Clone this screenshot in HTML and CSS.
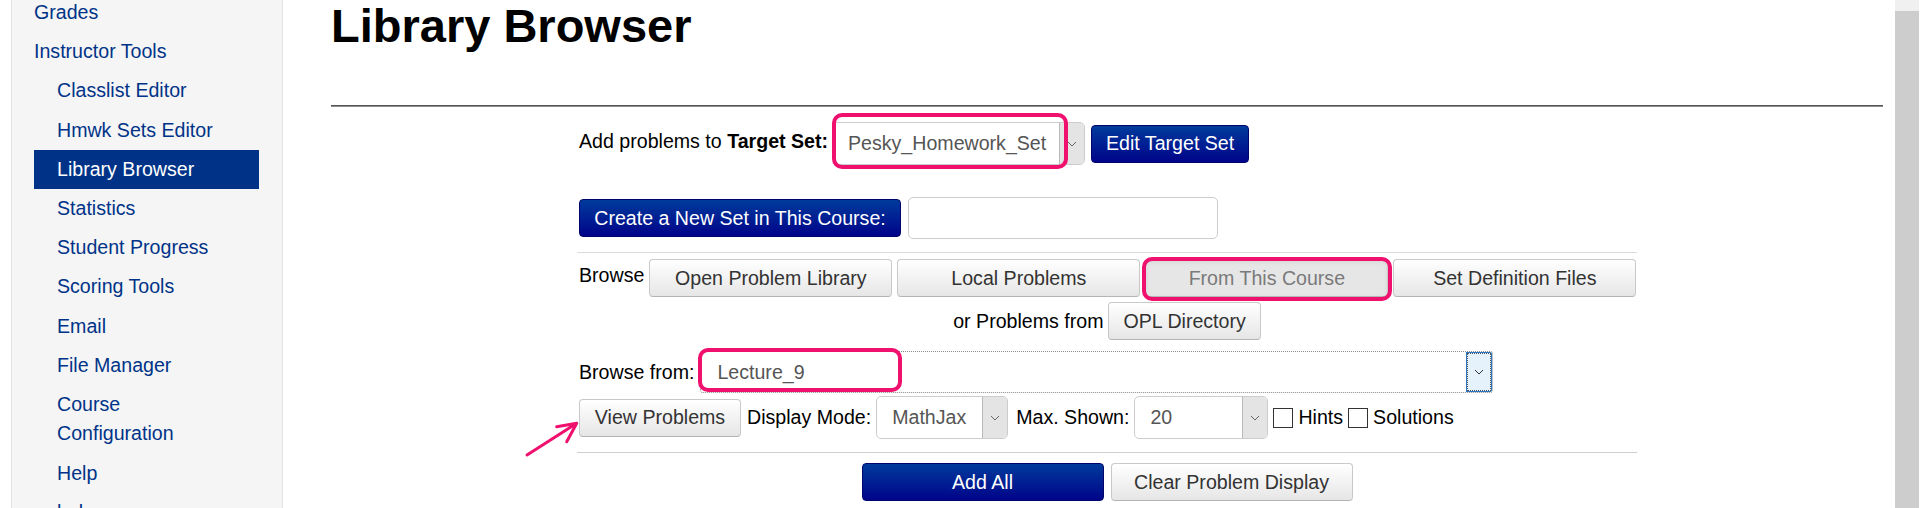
FILE: index.html
```html
<!DOCTYPE html>
<html lang="en">
<head>
<meta charset="utf-8">
<title>Library Browser</title>
<link rel="stylesheet" href="styles.css">
</head>
<body>
<div class="page">
  <aside class="sidebar">
    <ul class="nav">
      <li><a class="top">Grades</a></li>
      <li><a class="top">Instructor Tools</a></li>
      <li><a class="sub">Classlist Editor</a></li>
      <li><a class="sub">Hmwk Sets Editor</a></li>
      <li><a class="sub active">Library Browser</a></li>
      <li><a class="sub">Statistics</a></li>
      <li><a class="sub">Student Progress</a></li>
      <li><a class="sub">Scoring Tools</a></li>
      <li><a class="sub">Email</a></li>
      <li><a class="sub">File Manager</a></li>
      <li><a class="sub">Course Configuration</a></li>
      <li><a class="sub">Help</a></li>
      <li><a class="sub">help</a></li>
    </ul>
  </aside>

  <main class="main">
    <h1 class="title">Library Browser</h1>
    <div class="rule-dark"></div>

    <div class="form">
      <div class="row row1">
        <span class="label lift">Add problems to <b>Target Set:</b></span>
        <span class="select sel-target"><span class="val">Pesky_Homework_Set</span><span class="arrow"><svg width="10" height="6" viewBox="0 0 10 6"><path d="M1 1l4 4 4-4" fill="none" stroke="#666" stroke-width="1"/></svg></span></span>
        <button class="btn blue">Edit Target Set</button>
      </div>

      <div class="row row2">
        <button class="btn blue btn-create">Create a New Set in This Course:</button>
        <input class="text-input" type="text">
      </div>

      <div class="rule-light"></div>

      <div class="row row3">
        <span class="label lift">Browse</span>
        <button class="btn wide">Open Problem Library</button>
        <button class="btn wide">Local Problems</button>
        <button class="btn wide pressed">From This Course</button>
        <button class="btn wide">Set Definition Files</button>
      </div>

      <div class="row row3b">
        <span class="label">or Problems from</span>
        <button class="btn">OPL Directory</button>
      </div>

      <div class="row row4">
        <span class="label">Browse from:</span>
        <span class="select focus sel-browse"><span class="val">Lecture_9</span><span class="arrow"><svg width="10" height="6" viewBox="0 0 10 6"><path d="M1 1l4 4 4-4" fill="none" stroke="#333" stroke-width="1"/></svg></span></span>
      </div>

      <div class="row row5">
        <button class="btn btn-view">View Problems</button>
        <span class="label ml1">Display Mode:</span>
        <span class="select sel-mode"><span class="val">MathJax</span><span class="arrow"><svg width="10" height="6" viewBox="0 0 10 6"><path d="M1 1l4 4 4-4" fill="none" stroke="#666" stroke-width="1"/></svg></span></span>
        <span class="label ml3">Max. Shown:</span>
        <span class="select sel-max"><span class="val">20</span><span class="arrow"><svg width="10" height="6" viewBox="0 0 10 6"><path d="M1 1l4 4 4-4" fill="none" stroke="#666" stroke-width="1"/></svg></span></span>
        <input type="checkbox" class="check ml1"><span class="label">Hints</span>
        <input type="checkbox" class="check"><span class="label">Solutions</span>
      </div>

      <div class="rule-light rule-low"></div>

      <div class="row row6">
        <button class="btn blue wide-b">Add All</button>
        <button class="btn wide-b">Clear Problem Display</button>
      </div>

      <span class="mark mark-target"></span>
      <span class="mark mark-course"></span>
      <span class="mark mark-lecture"></span>
      <svg class="pointer" width="62" height="52" viewBox="0 0 62 52">
        <path d="M6 38L55.7 6.3M35.7 9.7L55.7 6.3L45.7 24.7" fill="none" stroke="#f0106e" stroke-width="3" stroke-linecap="round" stroke-linejoin="round"/>
      </svg>
    </div>
  </main>

  <div class="scrollbar"><div class="thumb"></div></div>
</div>
</body>
</html>
```

FILE: styles.css
```css
* { box-sizing: border-box; }

html, body {
  margin: 0;
  padding: 0;
  height: 508px;
  overflow: hidden;
  background: #fff;
}

body {
  font-family: "Liberation Sans", Arial, sans-serif;
  font-size: 19.6px;
  line-height: 1.15;
  color: #000;
}

.page {
  display: flex;
  height: 508px;
}

/* ---------- sidebar ---------- */
.sidebar {
  width: 272px;
  margin-left: 11px;
  background: #f5f5f5;
  border-left: 1px solid #e3e3e3;
  border-right: 1px solid #e3e3e3;
  flex: none;
}

.nav {
  list-style: none;
  margin: -6.8px 23px 0 22px;
  padding: 0;
}

.nav a {
  display: block;
  color: #003388;
  line-height: 29.4px;
  padding: 4.9px 0;
}

.nav a.top { padding-left: 0; }
.nav a.sub { padding-left: 23px; padding-right: 23px; }
.nav a.active { background: #003388; color: #fff; }

/* ---------- main ---------- */
.main {
  flex: 1;
  margin-left: 48px;
  margin-right: 12px;
  min-width: 0;
}

.title {
  margin: 0;
  padding-top: 1px;
  font-size: 47px;
  line-height: 50px;
  font-weight: bold;
  color: #000;
}

.rule-dark {
  margin-top: 54px;
  border-top: 1px solid #555;
  border-bottom: 1px solid #8c8c8c;
}

.form {
  display: flow-root;
  position: relative;
  width: 1060px;
  margin: 0 auto;
  padding-left: 2px;
}

.row {
  display: flex;
  align-items: center;
}

.row1 { margin-top: 15px; gap: 5px; }
.row1 .btn { margin-left: 1px; }
.row2 { margin-top: 32px; gap: 7px; }
.row3 { margin-top: 6px; gap: 5px; }
.row3b { margin-top: 5px; gap: 5px; justify-content: center; margin-left: -2px; }
.row4 { margin-top: 11px; gap: 6px; }
.row5 { margin-top: 3px; gap: 5px; }
.row6 { margin-top: 10px; gap: 7px; justify-content: center; margin-left: -2px; }

.label { white-space: nowrap; }
.lift { margin-bottom: 5px; }
.ml1 { margin-left: 1px; }
.ml3 { margin-left: 3px; }

.rule-light {
  margin-top: 13px;
  margin-left: -2px;
  border-top: 1px solid #dcdcdc;
}
.rule-low { margin-top: 13px; border-top-color: #cfcfcf; }

/* ---------- buttons ---------- */
.btn {
  font-family: inherit;
  font-size: 19.6px;
  line-height: 1.15;
  height: 38px;
  padding: 0 14px;
  border: 1px solid #c9c9c9;
  border-bottom-color: #b5b5b5;
  border-radius: 4px;
  background: linear-gradient(to bottom, #ffffff, #e6e6e6);
  color: #333;
  white-space: nowrap;
  flex: none;
}

.btn.blue {
  background: linear-gradient(to bottom, #003b9c, #00048a);
  border-color: #00056e;
  color: #fff;
}

.btn.wide { width: 243px; }
.btn.wide-b { width: 242px; }
.btn-create { width: 322px; }
.btn-view { width: 162px; }

.btn.pressed {
  background: #e6e6e6;
  color: #7a7a7a;
  box-shadow: inset 0 2px 4px rgba(0,0,0,0.08);
}

/* ---------- inputs ---------- */
.text-input {
  width: 310px;
  height: 42px;
  border: 1px solid #cccccc;
  border-radius: 5px;
  background: #fff;
  font-family: inherit;
  font-size: 19.6px;
}

.select {
  display: flex;
  align-items: stretch;
  height: 43px;
  border: 1px solid #cccccc;
  border-radius: 5px;
  background: #fff;
  color: #555;
  flex: none;
  overflow: hidden;
}

.select .val {
  flex: 1;
  display: flex;
  align-items: center;
  padding-left: 14px;
  white-space: nowrap;
}

.select .arrow {
  width: 25px;
  display: flex;
  align-items: center;
  justify-content: center;
  background: #e4e4e4;
  border-left: 1px solid #b9b9b9;
}

.sel-target { width: 252px; }
.sel-mode { width: 132px; }
.sel-mode .val { padding-left: 15px; }
.sel-max { width: 134px; }
.sel-max .val { padding-left: 15px; }

.sel-browse {
  width: 793px;
  height: 42px;
  border: 1px dotted #8a8a8a;
  border-radius: 3px;
}
.sel-browse .val { padding-left: 16px; }
.sel-browse .arrow {
  width: 26px;
  background: #e5f1fb;
  border: 1px solid #2c74c4;
  outline: 1px dotted #555;
  outline-offset: -2px;
}

.check {
  -webkit-appearance: none;
  appearance: none;
  width: 20px;
  height: 20px;
  margin: 0;
  border: 1px solid #333;
  background: #fff;
  flex: none;
}

/* ---------- annotations ---------- */
.mark {
  position: absolute;
  border: 4px solid #f0106e;
  border-radius: 10px;
  pointer-events: none;
}
.mark-target { left: 255px; top: 6px; width: 236px; height: 56px; }
.mark-course { left: 565px; top: 150px; width: 250px; height: 44px; }
.mark-lecture { left: 121px; top: 241px; width: 204px; height: 44px; }

.pointer {
  position: absolute;
  left: -56px;
  top: 310px;
}

/* ---------- scrollbar ---------- */
.scrollbar {
  width: 24px;
  margin-right: 1px;
  background: #f0f0f0;
  display: flex;
  flex-direction: column;
  flex: none;
}
.scrollbar .thumb {
  margin-top: 11px;
  flex: 1;
  background: #cdcdcd;
}
```
